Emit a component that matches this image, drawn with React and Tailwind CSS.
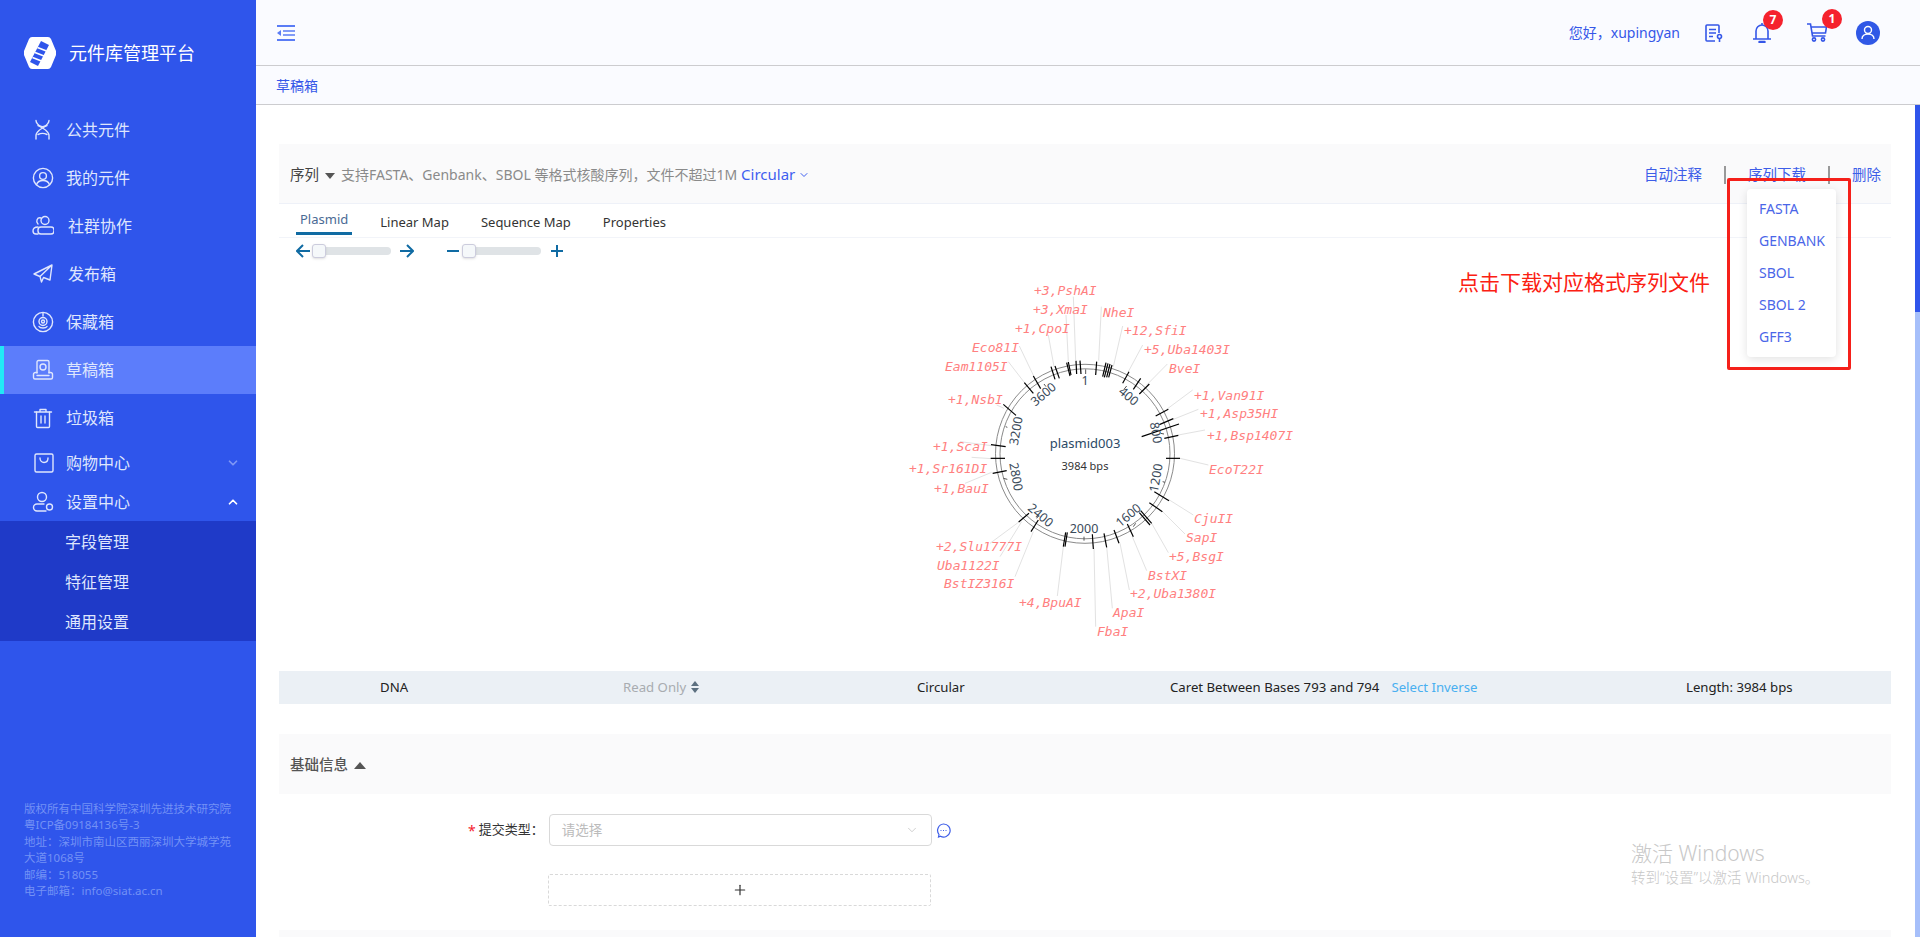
import { ChevronDown, ChevronUp, Plus } from 'lucide-react';

// plasmid map coordinates were read off 3x crops, these bring them back to page pixels
const fromTop = ([x1, y1, x2, y2]) => [900 + x1 / 3, 270 + y1 / 3, 900 + x2 / 3, 270 + y2 / 3];
const fromRing = ([x1, y1, x2, y2]) => [970 + x1 / 3, 350 + y1 / 3, 970 + x2 / 3, 350 + y2 / 3];

// full-width punctuation
const COMMA = '\uFF0C';
const COLON = '\uFF1A';

const cutLabels = [
  ['+3,PshAI', 1034, 295], ['+3,XmaI', 1033, 314], ['+1,CpoI', 1015, 333], ['NheI', 1103, 317],
  ['+12,SfiI', 1124, 335], ['+5,Uba1403I', 1144, 354], ['BveI', 1169, 373], ['Eco81I', 972, 352],
  ['Eam1105I', 945, 371], ['+1,NsbI', 948, 404], ['+1,Van91I', 1194, 400], ['+1,Asp35HI', 1200, 418],
  ['+1,Bsp1407I', 1207, 440], ['+1,ScaI', 933, 451], ['+1,Sr161DI', 909, 473], ['EcoT22I', 1209, 474],
  ['+1,BauI', 934, 493], ['CjuII', 1194, 523], ['SapI', 1186, 542], ['+5,BsgI', 1169, 561],
  ['BstXI', 1148, 580], ['+2,Uba1380I', 1130, 598], ['ApaI', 1113, 617], ['FbaI', 1097, 636],
  ['+4,BpuAI', 1019, 607], ['BstIZ316I', 944, 588], ['Uba1122I', 937, 570], ['+2,Slu1777I', 936, 551],
];

const leaders = [
  [520, 80, 527, 270], [498, 135, 505, 275], [445, 195, 462, 290], [604, 110, 596, 272],
  [668, 168, 640, 290], [728, 225, 685, 305], [802, 282, 740, 345], [358, 228, 403, 322],
  [325, 275, 375, 340], [290, 405, 312, 415], [878, 360, 800, 418], [895, 418, 820, 448],
  [915, 480, 835, 495], [180, 515, 275, 527], [215, 562, 275, 566], [925, 585, 840, 565],
  [195, 640, 275, 607], [880, 735, 805, 688], [855, 792, 785, 722], [805, 848, 755, 760],
  [740, 902, 697, 800], [688, 960, 660, 820], [637, 1015, 620, 830], [587, 1070, 582, 835],
  [472, 978, 490, 830], [345, 920, 400, 785], [300, 860, 365, 755], [270, 820, 358, 755],
].map(fromTop);

const cuts = [
  [163, 98, 190, 130], [190, 78, 212, 116], [243, 50, 255, 88], [255, 48, 268, 85],
  [290, 38, 300, 78], [295, 36, 303, 75], [318, 32, 320, 72], [330, 32, 333, 72],
  [380, 35, 377, 75], [408, 38, 398, 80], [414, 40, 403, 82], [420, 42, 410, 82],
  [426, 45, 416, 82], [477, 65, 458, 100], [512, 85, 490, 118], [538, 102, 508, 132],
  [595, 178, 557, 198], [610, 206, 568, 224], [627, 222, 515, 260], [625, 256, 583, 265],
  [630, 325, 588, 325], [597, 452, 553, 425], [577, 485, 538, 458], [545, 520, 512, 482],
  [540, 525, 508, 488], [490, 560, 472, 522], [447, 580, 432, 540], [410, 592, 402, 550],
  [370, 597, 367, 553], [285, 590, 292, 547], [280, 590, 287, 547], [183, 545, 205, 510],
  [146, 516, 177, 490], [68, 370, 110, 362], [62, 325, 105, 325], [63, 284, 107, 290],
  [100, 163, 138, 196],
].map(fromRing);

const scaleTicks = [
  [347, 58, 347, 72], [342, 560, 342, 572], [100, 385, 112, 388], [107, 230, 112, 232],
  [578, 395, 585, 397], [497, 520, 490, 530], [470, 108, 462, 118], [228, 110, 222, 102],
  [200, 505, 206, 497], [572, 250, 582, 252],
].map(fromRing);

const bpLabels = [
  ['1', 1085, 382, 0], ['400', 1128, 397, 40], ['800', 1155, 433, 80], ['1200', 1157, 478, -80],
  ['1600', 1129, 516, -40], ['2000', 1084, 530, 0], ['2400', 1040, 516, 40], ['2800', 1015, 477, 80],
  ['3200', 1017, 431, -80], ['3600', 1044, 395, -40],
];

const NavIcon = ({ name }) => {
  const common = { width: 22, height: 22, viewBox: '0 0 22 22', fill: 'none', stroke: 'currentColor', strokeWidth: 1.4, strokeLinecap: 'round', strokeLinejoin: 'round' };
  switch (name) {
    case 'dna':
      return (
        <svg {...common}>
          <path d="M4 1.500c0 7 13 8 13 15v3.500" />
          <path d="M17 1.500c0 7-13 8-13 15v3.500" />
          <path d="M6 6.500c3 1.500 6 1.500 9 0M6 15.500c3-1.500 6-1.500 9 0" />
        </svg>
      );
    case 'user':
      return (
        <svg {...common}>
          <circle cx="11" cy="11" r="9.600" />
          <circle cx="11" cy="9" r="3.400" />
          <path d="M4.600 17.500c1-3 3.600-4 6.400-4s5.400 1 6.400 4" />
        </svg>
      );
    case 'group':
      return (
        <svg {...common}>
          <circle cx="13" cy="5.500" r="4" />
          <path d="M9 3C5 2 3.500 6.500 6 9" />
          <rect x="6" y="12" width="16" height="7" rx="3" />
          <path d="M6 12C3 12 1 13.500 1 16c0 2 1.500 3 3 3h2" />
        </svg>
      );
    case 'send':
      return (
        <svg {...common}>
          <path d="M20 2 2 11l6 2.500L20 2l-2 15-6.500-2.500-2 4.500-1.500-5.500" />
        </svg>
      );
    case 'collect':
      return (
        <svg {...common}>
          <circle cx="11" cy="11" r="9.600" />
          <circle cx="11" cy="10.500" r="4" />
          <circle cx="11" cy="10.500" r="1.500" />
          <path d="M7 15.500c1 2 7 2 8 0" />
          <path d="M11 2v3" />
        </svg>
      );
    case 'draft':
      return (
        <svg {...common}>
          <path d="M5 14V3a1.500 1.500 0 0 1 1.500-1.500h9A1.500 1.500 0 0 1 17 3v11" />
          <circle cx="11" cy="8" r="3" />
          <path d="M5 13.500H3.500A2 2 0 0 0 1.500 15.500v3c0 .8.700 1.500 1.500 1.500h16c.8 0 1.500-.7 1.500-1.500v-3a2 2 0 0 0-2-2H17" />
          <path d="M5 16.500h12" />
        </svg>
      );
    case 'trash':
      return (
        <svg {...common}>
          <path d="M2.500 5h17M8 5V2.500h6V5" />
          <path d="M4.500 5v14.500a1 1 0 0 0 1 1h11a1 1 0 0 0 1-1V5" />
          <path d="M9 9v7M13 9v7" />
        </svg>
      );
    case 'bag':
      return (
        <svg {...common}>
          <rect x="2" y="2" width="18" height="18" rx="1.500" />
          <path d="M7 6c0 6 8 6 8 0" />
        </svg>
      );
    default:
      return (
        <svg {...common}>
          <circle cx="10" cy="6" r="4.500" />
          <path d="M12 13H5a3.500 3.500 0 0 0-3.500 3.500v0A3.500 3.500 0 0 0 5 20h9" />
          <circle cx="17.500" cy="16" r="3" />
        </svg>
      );
  }
};

const menu = [
  { label: '公共元件', icon: 'dna', textClass: 'ml-[12px]' },
  { label: '我的元件', icon: 'user', textClass: 'ml-[12px]' },
  { label: '社群协作', icon: 'group', textClass: 'ml-[14px]' },
  { label: '发布箱', icon: 'send', textClass: 'ml-[14px]' },
  { label: '保藏箱', icon: 'collect', textClass: 'ml-[12px]' },
  { label: '草稿箱', icon: 'draft', textClass: 'ml-[12px]', active: true },
  { label: '垃圾箱', icon: 'trash', textClass: 'ml-[12px]' },
];

const downloadTypes = ['FASTA', 'GENBANK', 'SBOL', 'SBOL 2', 'GFF3'];

const Sidebar = () => (
  <aside className="flex h-[937px] w-[256px] shrink-0 flex-col bg-[#2f55eb] text-[#dfe6fd]">
    <div className="flex h-[106px] items-start pl-[24px] pt-[37px]">
      <svg width="32" height="32" viewBox="0 0 32 32">
        <path d="M8 0h16q2 0 3 2l5 12q1 2 0 4l-5 12q-1 2-3 2H8q-2 0-3-2L0 18q-1-2 0-4L5 2q1-2 3-2Z" fill="#fff" />
        <path d="M21 6 10 27" stroke="#2f55eb" strokeWidth="9" fill="none" />
        <path d="M13.500 10.500l9 3.500M11 15.500l9 3.500M8.500 20.500l9 3.500" stroke="#fff" strokeWidth="1.800" fill="none" />
      </svg>
      <span className="ml-[13px] mt-[3px] text-[18px] leading-[26px] text-white">元件库管理平台</span>
    </div>
    <nav>
      {menu.map(item => (
        <div
          key={item.label}
          className={`relative flex h-12 items-center pl-[32px] text-[16px] ${item.active ? 'bg-[#5c7dfb]' : ''}`}
        >
          {item.active && <span className="absolute inset-y-0 left-0 w-[4px] bg-[#22e8f6]"></span>}
          <NavIcon name={item.icon} />
          <span className={item.textClass}>{item.label}</span>
        </div>
      ))}
      <div className="flex h-[41px] items-center pl-[33px] pr-[16px] text-[16px]">
        <NavIcon name="bag" />
        <span className="ml-[11px] flex-1">购物中心</span>
        <ChevronDown className="h-[14px] w-[14px] text-[#7f97f5]" strokeWidth={3} />
      </div>
      <div className="flex h-[38px] items-center pl-[32px] pr-[16px] text-[16px]">
        <NavIcon name="setting" />
        <span className="ml-[12px] flex-1">设置中心</span>
        <ChevronUp className="h-[14px] w-[14px] text-white" strokeWidth={3} />
      </div>
      <div className="bg-[#1f3ac8] pl-[65px] pt-[1px] text-[16px]">
        <div className="flex h-[40px] items-center">字段管理</div>
        <div className="flex h-[40px] items-center">特征管理</div>
        <div className="flex h-[39px] items-center">通用设置</div>
      </div>
    </nav>
    <div className="mt-[160px] w-[236px] pl-[24px] text-[11.500px] leading-[16.400px] text-[#7391f5]">
      <p>版权所有中国科学院深圳先进技术研究院</p>
      <p>粤ICP备09184136号-3</p>
      <p>{`地址${COLON}深圳市南山区西丽深圳大学城学苑大道1068号`}</p>
      <p>{`邮编${COLON}518055`}</p>
      <p>{`电子邮箱${COLON}info@siat.ac.cn`}</p>
    </div>
  </aside>
);

const Header = () => (
  <header className="flex h-[66px] items-center border-b border-[#cccccf] bg-[#fafbff] pl-[21px] pr-[40px] text-[#3557e8]">
    <svg width="18" height="16" viewBox="0 0 18 16" className="text-[#5a7cf5]" fill="none" stroke="currentColor">
      <path d="M0 1h18M0 15h18" strokeWidth="2" />
      <path d="M6 6h12M6 10h12" strokeWidth="1.500" />
      <path d="M4 5v6L0 8Z" fill="currentColor" stroke="none" />
    </svg>
    <span className="ml-auto text-[14px]">{`您好${COMMA}xupingyan`}</span>
    <svg className="ml-[25px]" width="18" height="18" viewBox="0 0 18 18" fill="none" stroke="currentColor" strokeWidth="1.600">
      <path d="M10 17H2a1 1 0 0 1-1-1V2a1 1 0 0 1 1-1h11a1 1 0 0 1 1 1v7" />
      <path d="M4 5.500h7M4 9h7M4 12.500h4" />
      <circle cx="14.500" cy="12.500" r="2" />
      <path d="M14.500 15v3" />
    </svg>
    <span className="relative ml-[30px] h-[20px] w-[18px]">
      <svg width="18" height="20" viewBox="0 0 18 20" fill="none" stroke="currentColor" strokeWidth="1.600">
        <path d="M0 16h18M3 16V8a6 6 0 0 1 12 0v8M9 0v2" />
        <path d="M6.500 19h5" strokeWidth="2.500" strokeLinecap="round" />
      </svg>
      <span className="absolute -right-[12px] -top-[13px] flex h-5 w-5 items-center justify-center rounded-full bg-[#f5222d] text-[12px] font-bold text-white">7</span>
    </span>
    <span className="relative ml-[36px] h-[19px] w-[20px]">
      <svg width="20" height="19" viewBox="0 0 20 19" fill="none" stroke="currentColor" strokeWidth="1.600">
        <path d="M0 1h3.500l2 12h13M4 4h15.500l-1 6H5" />
        <circle cx="7" cy="16.500" r="1.600" />
        <circle cx="16" cy="16.500" r="1.600" />
      </svg>
      <span className="absolute -right-[15px] -top-[14px] flex h-5 w-5 items-center justify-center rounded-full bg-[#f5222d] text-[12px] font-bold text-white">1</span>
    </span>
    <span className="ml-[29px] flex h-6 w-6 items-center justify-center rounded-full bg-[#3058e6]">
      <svg width="14" height="15" viewBox="0 0 14 15" fill="none" stroke="#fff" strokeWidth="1.400">
        <circle cx="7" cy="5" r="3.500" />
        <path d="M1 14c0-3 2.500-5 6-5s6 2 6 5" />
      </svg>
    </span>
  </header>
);

// viewBox keeps the page coordinates the map data was measured in
const PlasmidMap = () => (
  <svg className="block" width="1664" height="407" viewBox="256 264 1664 407">
    {leaders.map(([x1, y1, x2, y2], i) => (
      <line key={i} x1={x1} y1={y1} x2={x2} y2={y2} stroke="#e2e2e2" />
    ))}
    <circle cx="1085" cy="453.800" r="89.500" fill="none" stroke="#8a8a8a" />
    <circle cx="1085" cy="453.800" r="85" fill="none" stroke="#8a8a8a" />
    {scaleTicks.map(([x1, y1, x2, y2], i) => (
      <line key={i} x1={x1} y1={y1} x2={x2} y2={y2} stroke="#555" />
    ))}
    {cuts.map(([x1, y1, x2, y2], i) => (
      <line key={i} x1={x1} y1={y1} x2={x2} y2={y2} stroke="#000" strokeWidth="1.200" />
    ))}
    {cutLabels.map(([text, x, y]) => (
      <text key={text} x={x} y={y} fill="#ff8080" fontSize="13" fontStyle="italic" fontFamily="'DejaVu Sans Mono', monospace">{text}</text>
    ))}
    {bpLabels.map(([text, x, y, rot]) => (
      <text key={text} x={x} y={y} fill="#3a4a5a" fontSize="12.500" textAnchor="middle" dominantBaseline="middle" transform={`rotate(${rot} ${x} ${y})`}>{text}</text>
    ))}
    <text x="1085" y="445" fill="#2c4a66" fontSize="13" textAnchor="middle" dominantBaseline="middle">plasmid003</text>
    <text x="1085" y="467" fill="#333" fontSize="11" textAnchor="middle" dominantBaseline="middle">3984 bps</text>
  </svg>
);

const ZoomSlider = () => (
  <span className="relative block h-[8px] w-[79px] rounded-full bg-[#dfe3e6]">
    <span className="absolute left-0 -top-[3px] h-[14px] w-[14px] rounded-[3px] border border-[#ccd] bg-[#f5f8fa] shadow-sm"></span>
  </span>
);

const SectionPanel = () => (
  <div className="relative ml-[23px] mr-[29px] mt-[39px]">
    <div className="flex h-[60px] items-center border-b border-[#eef1f8] bg-[#fafafb] pl-[11px] pr-[10px] pt-[2px]">
      <span className="text-[14.500px] text-[#444]">序列</span>
      <span className="ml-[6px] mt-[2px] h-0 w-0 border-x-[5px] border-t-[6px] border-x-transparent border-t-[#555]"></span>
      <span className="ml-[6px] text-[14px] text-[#8a8a8a]">{`支持FASTA、Genbank、SBOL 等格式核酸序列${COMMA}文件不超过1M`}</span>
      <span className="ml-[4px] text-[15px] text-[#3f5ff0]">Circular</span>
      <ChevronDown className="ml-[3px] h-[12px] w-[12px] text-[#3f5ff0]" />
      <span className="ml-auto text-[14.500px] text-[#3d5de8]">自动注释</span>
      <span className="ml-[22px] h-[18px] w-[2px] bg-[#999]"></span>
      <span className="ml-[22px] text-[14.500px] text-[#3d5de8]">序列下载</span>
      <span className="ml-[22px] h-[18px] w-[2px] bg-[#999]"></span>
      <span className="ml-[22px] text-[14.500px] text-[#3d5de8]">删除</span>
    </div>
    <div className="flex h-[34px] items-start gap-[24px] border-b border-[#f2f4f9] pl-[17px] text-[13px] text-[#333]">
      <span className="h-[31px] border-b-[3px] border-[#106ba3] px-[4px] leading-[30px] text-[#4a6a94]">Plasmid</span>
      <span className="px-[4px] leading-[36px]">Linear Map</span>
      <span className="px-[4px] leading-[36px]">Sequence Map</span>
      <span className="px-[4px] leading-[36px]">Properties</span>
    </div>
    <div className="flex h-[26px] items-center pl-[17px] text-[#106ba3]">
      <svg width="14" height="14" viewBox="0 0 14 14" fill="none" stroke="currentColor" strokeWidth="2">
        <path d="M14 7H1M7 1 1 7l6 6" />
      </svg>
      <span className="ml-[2px]"><ZoomSlider /></span>
      <svg className="ml-[9px]" width="14" height="14" viewBox="0 0 14 14" fill="none" stroke="currentColor" strokeWidth="2">
        <path d="M0 7h13M7 1l6 6-6 6" />
      </svg>
      <svg className="ml-[33px]" width="12" height="14" viewBox="0 0 12 14" fill="none" stroke="currentColor" strokeWidth="2">
        <path d="M0 7h12" />
      </svg>
      <span className="ml-[3px]"><ZoomSlider /></span>
      <svg className="ml-[10px]" width="12" height="14" viewBox="0 0 12 14" fill="none" stroke="currentColor" strokeWidth="2">
        <path d="M0 7h12M6 1v12" />
      </svg>
    </div>
  </div>
);

const StatusBar = () => (
  <div className="ml-[23px] mr-[29px] flex h-[33px] items-center bg-[#ebf0f5] pl-[101px] text-[13.200px] text-[#222]">
    <span className="w-[243px]">DNA</span>
    <span className="flex w-[294px] items-center gap-[5px] text-[#a8acb0]">
      Read Only
      <span className="flex flex-col gap-[2px]">
        <span className="h-0 w-0 border-x-[4px] border-b-[5px] border-x-transparent border-b-[#5c7080]"></span>
        <span className="h-0 w-0 border-x-[4px] border-t-[5px] border-x-transparent border-t-[#5c7080]"></span>
      </span>
    </span>
    <span className="w-[253px]">Circular</span>
    <span className="w-[516px]">Caret Between Bases 793 and 794<span className="ml-[12px] text-[#48aff0]">Select Inverse</span></span>
    <span>Length: 3984 bps</span>
  </div>
);

const BasicInfo = () => (
  <div className="ml-[23px] mr-[29px] mt-[30px]">
    <div className="flex h-[60px] items-center bg-[#fafafb] pl-[11px] pt-[2px]">
      <span className="text-[14.500px] font-medium text-[#555]">基础信息</span>
      <span className="ml-[6px] h-0 w-0 border-x-[6px] border-b-[7px] border-x-transparent border-b-[#555]"></span>
    </div>
    <div className="mt-[20px] flex h-[32px] items-center pl-[189px]">
      <span className="text-[14px] text-[#f5222d]">*</span>
      <span className="ml-[3px] w-[70px] text-[13px] text-[#333]">{`提交类型${COLON}`}</span>
      <div className="flex h-[32px] w-[383px] items-center justify-between rounded-[4px] border border-[#d9d9d9] pl-[12px] pr-[12px]">
        <span className="text-[13.500px] text-[#bbb]">请选择</span>
        <ChevronDown className="h-[14px] w-[14px] text-[#bbb]" strokeWidth={1.200} />
      </div>
      <svg className="ml-[4px]" width="15" height="15" viewBox="0 0 15 15" fill="none" stroke="#3d5de8" strokeWidth="1.200">
        <path d="M7.500 1a6.500 6.500 0 1 1-3 12.200L2.500 14l.5-2.500A6.500 6.500 0 0 1 7.500 1Z" />
        <path d="M4.500 7.500h1M7 7.500h1M9.500 7.500h1" />
      </svg>
    </div>
    <div className="ml-[269px] mt-[28px] flex h-[32px] w-[383px] items-center justify-center rounded-[2px] border border-dashed border-[#d9d9d9]">
      <Plus className="h-[16px] w-[16px] text-[#333]" strokeWidth={1.800} />
    </div>
    <div className="mt-[24px] h-[40px] bg-[#fafafb]"></div>
  </div>
);

const App = () => {
  return (
    <div className="relative flex h-[937px] w-[1920px] overflow-hidden bg-white font-['Noto_Sans','Noto_Sans_CJK_SC',sans-serif]">
      <Sidebar />
      <main className="min-w-0 flex-1">
        <Header />
        <div className="flex h-[39px] items-center border-b border-[#cccccf] bg-[#fafbff] pl-[20px] text-[14px] text-[#3557e8]">草稿箱</div>
        <SectionPanel />
        <PlasmidMap />
        <StatusBar />
        <BasicInfo />
      </main>

      <div className="absolute left-[1747px] top-[189px] w-[89px] rounded-[4px] bg-white py-[4px] pl-[12px] text-[14px] leading-[32px] text-[#4a66e8] shadow-[0_2px_10px_rgba(0,0,0,0.12)]">
        {downloadTypes.map(type => (
          <div key={type}>{type}</div>
        ))}
      </div>
      <div className="absolute left-[1727px] top-[178px] h-[192px] w-[124px] rounded-[2px] border-[3px] border-[#f5201a]"></div>
      <span className="absolute left-[1458px] top-[266px] text-[21px] leading-[32px] text-[#fb2012]">点击下载对应格式序列文件</span>

      <div className="absolute left-[1631px] top-[840px] font-light text-[#c8c8c8]">
        <div className="text-[21px] leading-[26px]">激活 Windows</div>
        <div className="text-[14.500px] leading-[22px]">{'转到\u201C设置\u201D以激活 Windows\u3002'}</div>
      </div>

      <div className="absolute bottom-0 right-0 top-[105px] w-[5px] bg-[#a6bffa]">
        <div className="h-[207px] bg-[#2f55eb]"></div>
      </div>
    </div>
  );
};

export default App;
